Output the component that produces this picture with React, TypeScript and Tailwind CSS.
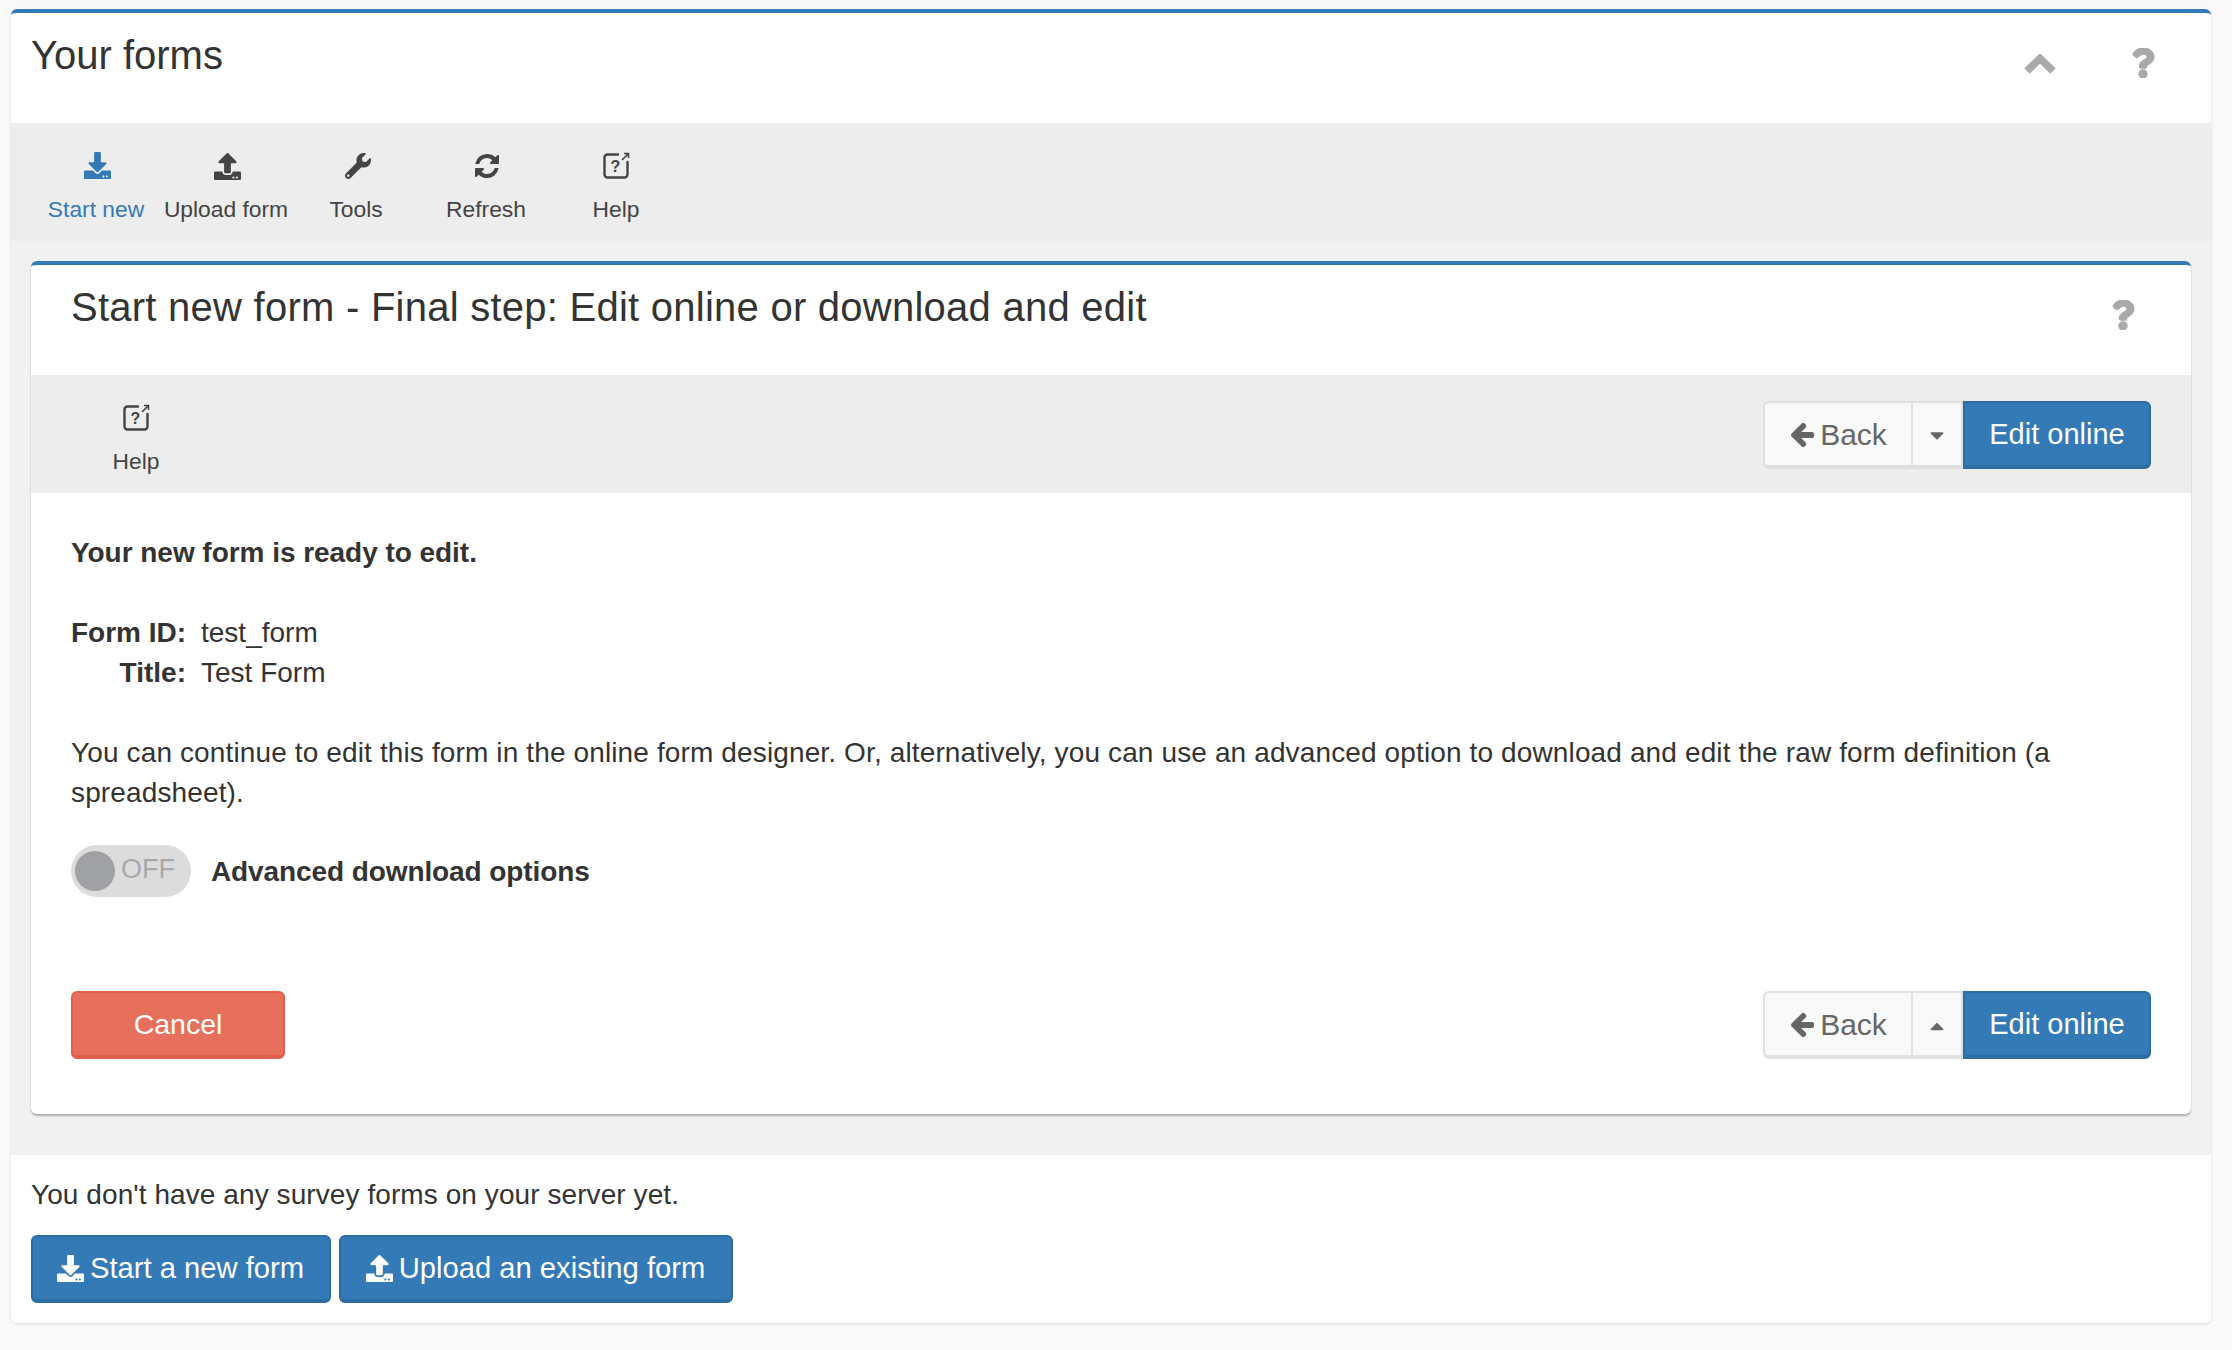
import React from "react";
import { FaDownload, FaUpload, FaWrench, FaCaretDown, FaCaretUp, FaQuestion } from "react-icons/fa";

function HelpIcon() {
  return (
    <svg width="28" height="28" viewBox="0 0 28 28" fill="none" className="text-[#444] -ml-[2px]">
      <path d="M16 2.5H5.5a3 3 0 0 0-3 3v17a3 3 0 0 0 3 3h17a3 3 0 0 0 3-3V10" stroke="currentColor" strokeWidth="2.4" strokeLinecap="round" />
      <path d="M20 8l6-6M22 1.5h4.5V6" stroke="currentColor" strokeWidth="1.6" />
      <text x="13.5" y="20" textAnchor="middle" fontSize="16" fontWeight="700" fontFamily="Liberation Sans" fill="currentColor">?</text>
    </svg>
  );
}

function ChevronUp() {
  return (
    <svg width="32" height="21" viewBox="0 0 32 21" fill="none" className="text-[#a9a9ab]">
      <path d="M3 17 16 4.5 29 17" stroke="currentColor" strokeWidth="7.5" strokeLinejoin="miter" />
    </svg>
  );
}

function RefreshIcon() {
  return (
    <svg width="28" height="28" viewBox="0 0 1792 1792" fill="currentColor">
      <path d="M1639 1056q0 5-1 7-64 268-268 434.5t-478 166.5q-146 0-282.5-55t-243.5-157l-129 129q-19 19-45 19t-45-19-19-45v-448q0-26 19-45t45-19h448q26 0 45 19t19 45-19 45l-137 137q71 66 161 102t187 36q134 0 250-65t186-179q11-17 53-117 8-23 30-23h192q13 0 22.5 9.5t9.5 22.5zm25-800v448q0 26-19 45t-45 19h-448q-26 0-45-19t-19-45 19-45l138-138q-148-137-349-137-134 0-250 65t-186 179q-11 17-53 117-8 23-30 23h-199q-13 0-22.5-9.5t-9.5-22.5v-7q65-268 270-434.5t480-166.5q146 0 284 55.5t245 156.5l130-129q19-19 45-19t45 19 19 45z" />
    </svg>
  );
}

function ArrowLeft() {
  return (
    <svg width="28" height="28" viewBox="0 0 1792 1792" fill="currentColor">
      <path d="M1664 896v128q0 53-32.5 90.5t-84.5 37.5h-704l293 294q38 36 38 90t-38 90l-75 76q-37 37-90 37-52 0-91-37l-651-652q-37-37-37-90 0-52 37-91l651-650q38-38 91-38 52 0 90 38l75 74q38 38 38 91t-38 91l-293 293h704q52 0 84.5 37.5t32.5 90.5z" />
    </svg>
  );
}

function ToolButton({ icon, label, active }: { icon: React.ReactNode; label: string; active?: boolean }) {
  return (
    <div className={`w-[130px] flex flex-col items-center pt-[28px] ${active ? "text-[#337ab7]" : "text-[#444]"}`}>
      <div className="h-[30px] flex items-center justify-center">{icon}</div>
      <div className="mt-[13px] -ml-[2px] text-[22.8px] leading-[30px] whitespace-nowrap">{label}</div>
    </div>
  );
}

function BackGroup({ up }: { up?: boolean }) {
  return (
    <div className="flex h-[68px] text-[29px]">
      <button className="w-[150px] flex items-center justify-center gap-[4px] bg-[#f9f9f9] border-2 border-b-4 border-[#e0e0e0] rounded-l-[6px] text-[#666] text-[30px]">
        <span className="-ml-[1px]"><ArrowLeft /></span>
        <span className="pt-[1px]">Back</span>
      </button>
      <button className="w-[50px] flex items-center justify-center bg-[#f9f9f9] border-2 border-l-0 border-b-4 border-[#e0e0e0] text-[#666]">
        {up ? <FaCaretUp size={22} className="mt-[4px]" /> : <FaCaretDown size={22} className="mt-[2px]" />}
      </button>
      <button className="w-[188px] bg-[#337ab7] border-2 border-b-4 border-[#2e6da4] rounded-r-[6px] text-white">Edit online</button>
    </div>
  );
}

export default function App() {
  return (
    <div className="min-h-[1350px] bg-[#f9f9f9] pt-[9px] font-['Liberation_Sans',Arial,sans-serif] text-[28px] leading-[40px] text-[#333]">
      <div className="ml-[11px] w-[2200px] rounded-[6px] shadow-[0_1px_3px_rgba(0,0,0,0.12)]">
        <div className="bg-white border-t-4 border-[#337ab7] rounded-t-[6px] h-[114px] pl-[20px] pr-[53px] flex justify-between items-start">
          <h1 className="text-[40px] leading-[44px] mt-[20px]">Your forms</h1>
          <div className="flex items-center gap-[72px] mt-[38px] text-[#a9a9ab]">
            <ChevronUp />
            <FaQuestion size={30} stroke="currentColor" strokeWidth={22} className="-mt-[3px]" />
          </div>
        </div>
        <div className="bg-[#ededed] h-[118px] pl-[21px] flex">
          <ToolButton active icon={<FaDownload size={27} className="-mt-[2px]" />} label="Start new" />
          <ToolButton icon={<FaUpload size={27} />} label="Upload form" />
          <ToolButton icon={<FaWrench size={26} className="ml-[2px]" />} label="Tools" />
          <ToolButton icon={<RefreshIcon />} label="Refresh" />
          <ToolButton icon={<HelpIcon />} label="Help" />
        </div>
        <div className="bg-[#f1f1f1] px-[20px] pt-[20px] pb-[41px]">
          <div className="bg-white rounded-[6px] shadow-[0_2px_2px_rgba(0,0,0,0.28)]">
            <div className="border-t-4 border-[#337ab7] rounded-t-[6px] h-[114px] pl-[40px] pr-[53px] flex justify-between items-start">
              <h2 className="text-[40px] leading-[44px] tracking-[0.25px] mt-[20px]">Start new form - Final step: Edit online or download and edit</h2>
              <FaQuestion size={30} stroke="currentColor" strokeWidth={22} className="mt-[35px] text-[#a9a9ab]" />
            </div>
            <div className="bg-[#ededed] h-[118px] pl-[41px] pr-[40px] flex justify-between">
              <ToolButton icon={<HelpIcon />} label="Help" />
              <div className="pt-[26px]"><BackGroup /></div>
            </div>
            <div className="px-[40px] pt-[40px] pb-[55px]">
              <p className="font-bold tracking-[-0.04px]">Your new form is ready to edit.</p>
              <div className="grid grid-cols-[115px_1fr] gap-x-[15px] mt-[40px]">
                <div className="font-bold text-right whitespace-nowrap">Form ID:</div>
                <div>test_form</div>
                <div className="font-bold text-right">Title:</div>
                <div>Test Form</div>
              </div>
              <p className="mt-[40px] tracking-[0.13px]">You can continue to edit this form in the online form designer. Or, alternatively, you can use an advanced option to download and edit the raw form definition (a spreadsheet).</p>
              <div className="flex items-center mt-[32px] gap-[20px]">
                <div className="relative w-[120px] h-[52px] rounded-full bg-[#dcdcdc] flex items-center">
                  <div className="w-[40px] h-[40px] rounded-full bg-[#a0a1a4] ml-[4px]" />
                  <span className="ml-[6px] text-[#a9a9ab] text-[27px] leading-[40px] -mt-[5px]">OFF</span>
                </div>
                <span className="font-bold tracking-[-0.1px] pt-[2px]">Advanced download options</span>
              </div>
              <div className="flex justify-between mt-[94px]">
                <button className="w-[214px] h-[68px] bg-[#e7705c] border-2 border-b-4 border-[#e0604b] rounded-[6px] text-white text-[28.5px]">Cancel</button>
                <BackGroup up />
              </div>
            </div>
          </div>
        </div>
        <div className="bg-white rounded-b-[6px] h-[168px] px-[20px] pt-[20px]">
          <p className="tracking-[0.08px]">You don't have any survey forms on your server yet.</p>
          <div className="flex gap-[8px] mt-[20px] text-[29.2px]">
            <button className="w-[300px] h-[68px] flex items-center justify-center gap-[6px] bg-[#337ab7] border-2 border-b-4 border-[#2e6da4] rounded-[6px] text-white">
              <FaDownload size={27} className="-ml-[1px]" /><span>Start a new form</span>
            </button>
            <button className="w-[394px] h-[68px] flex items-center justify-center gap-[6px] bg-[#337ab7] border-2 border-b-4 border-[#2e6da4] rounded-[6px] text-white">
              <FaUpload size={27} className="-ml-[1px]" /><span>Upload an existing form</span>
            </button>
          </div>
        </div>
      </div>
    </div>
  );
}
